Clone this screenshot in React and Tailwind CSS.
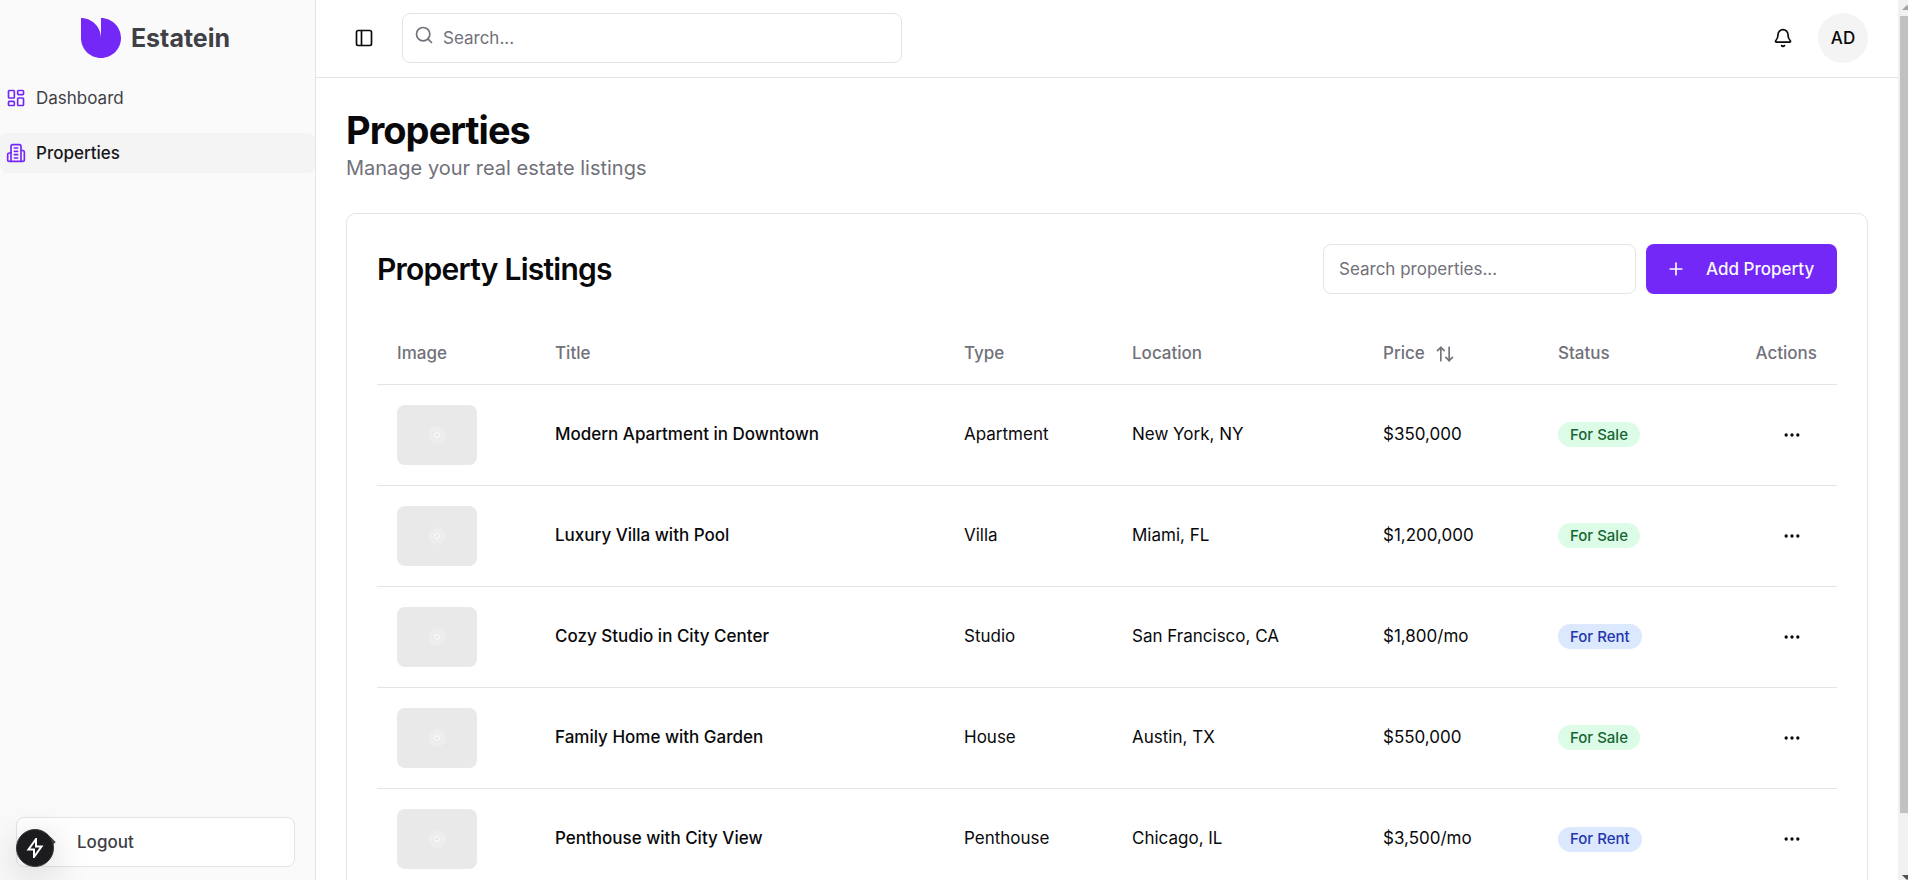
import {
  ArrowUpDown,
  Bell,
  Ellipsis,
  LayoutDashboard,
  LogOut,
  PanelLeft,
  Plus,
  Search,
} from "lucide-react";

const listings = [
  { title: "Modern Apartment in Downtown", type: "Apartment", location: "New York, NY", price: "$350,000", status: "For Sale" },
  { title: "Luxury Villa with Pool", type: "Villa", location: "Miami, FL", price: "$1,200,000", status: "For Sale" },
  { title: "Cozy Studio in City Center", type: "Studio", location: "San Francisco, CA", price: "$1,800/mo", status: "For Rent" },
  { title: "Family Home with Garden", type: "House", location: "Austin, TX", price: "$550,000", status: "For Sale" },
  { title: "Penthouse with City View", type: "Penthouse", location: "Chicago, IL", price: "$3,500/mo", status: "For Rent" },
];

const badgeColors = {
  "For Sale": "bg-[#dcfce7] text-[#166534]",
  "For Rent": "bg-[#dbe8fe] text-[#2536ac]",
};

function Logo() {
  return (
    <svg className="size-10" viewBox="0 0 40 40" fill="#7428f8" aria-hidden="true">
      <path d="M0 0C11 0 20 9 20 20V0C31 0 40 9 40 20S31 40 20 40S0 31 0 20Z" />
    </svg>
  );
}

function BuildingIcon() {
  return (
    <svg
      className="size-5 text-[#7428f8]"
      viewBox="0 0 24 24"
      fill="none"
      stroke="currentColor"
      strokeWidth="2"
      strokeLinecap="round"
      strokeLinejoin="round"
      aria-hidden="true"
    >
      <path d="M6 22V4a2 2 0 0 1 2-2h8a2 2 0 0 1 2 2v18Z" />
      <path d="M6 12H4a2 2 0 0 0-2 2v6a2 2 0 0 0 2 2h2" />
      <path d="M18 9h2a2 2 0 0 1 2 2v9a2 2 0 0 1-2 2h-2" />
      <path d="M10 6h4M10 10h4M10 14h4M10 18h4" />
    </svg>
  );
}

function Thumbnail() {
  return (
    <svg className="block h-[60px] w-20 rounded-lg bg-[#e9e9e9]" viewBox="0 0 80 60" fill="none" aria-hidden="true">
      <path d="M30 20l20 20M50 20L30 40" stroke="#e6e6e6" />
      <circle cx="40" cy="30" r="9" fill="#ededed" />
      <circle cx="40" cy="30" r="6" stroke="#efefef" />
      <circle cx="40" cy="30" r="3" fill="#f6f6f6" />
      <path d="M39 31l2-2" stroke="#cfcfcf" />
    </svg>
  );
}

function Sidebar() {
  return (
    <aside className="flex w-[316px] shrink-0 flex-col border-r border-[#e4e4e7] bg-[#fafafa] text-[#3f3f46]">
      <div className="flex h-[78px] items-center justify-center gap-[10px] pr-1 pb-[2px]">
        <Logo />
        <span className="text-[25px] leading-[35px] font-bold">Estatein</span>
      </div>
      <nav className="flex flex-col gap-[15px]">
        <a href="#dashboard" className="flex h-10 items-center gap-[10px] rounded-lg px-[6px]">
          <LayoutDashboard className="size-5 text-[#7428f8]" />
          Dashboard
        </a>
        <a href="#properties" className="flex h-10 items-center gap-[10px] rounded-lg bg-[#f4f4f5] px-[6px] font-medium text-[#18181b]" aria-current="page">
          <BuildingIcon />
          Properties
        </a>
      </nav>
      <div className="mt-auto py-[13px] pr-5 pl-4">
        <button type="button" className="flex h-[50px] w-full items-center gap-5 rounded-lg border border-[#e4e4e7] bg-white px-5 font-medium">
          <LogOut className="size-5" />
          Logout
        </button>
      </div>
    </aside>
  );
}

function Header() {
  return (
    <header className="flex h-[78px] shrink-0 items-center gap-5 border-b border-[#e4e4e7] px-[30px] pb-px">
      <button type="button" aria-label="Toggle sidebar" className="flex size-[36px] items-center justify-center">
        <PanelLeft className="size-5" />
      </button>
      <label className="relative block w-[500px]">
        <Search className="absolute top-3 left-3 size-5 text-[#71717a]" />
        <input
          type="search"
          aria-label="Search"
          placeholder="Search..."
          className="h-[50px] w-full rounded-lg border border-[#e4e4e7] bg-white pr-4 pl-10 placeholder:text-[#71717a]"
        />
      </label>
      <div className="ml-auto flex items-center gap-[10px]">
        <button type="button" aria-label="Notifications" className="flex size-[50px] items-center justify-center">
          <Bell className="size-5" />
        </button>
        <button type="button" className="size-[50px] rounded-full bg-[#f4f4f5] font-medium">AD</button>
      </div>
    </header>
  );
}

function ListingsTable() {
  return (
    <table className="w-full table-fixed text-left">
      <colgroup>
        <col className="w-[158px]" />
        <col />
        <col className="w-[168px]" />
        <col className="w-[251px]" />
        <col className="w-[175px]" />
        <col className="w-[150px]" />
        <col className="w-[149px]" />
      </colgroup>
      <thead>
        <tr className="h-[60px] border-b border-[#e4e4e7] text-[#71717a] [&>th]:px-5 [&>th]:font-medium">
          <th>Image</th>
          <th>Title</th>
          <th>Type</th>
          <th>Location</th>
          <th aria-sort="none">
            <button type="button" className="flex items-center gap-[10px]">
              Price
              <ArrowUpDown className="size-5" />
            </button>
          </th>
          <th>Status</th>
          <th className="text-right">Actions</th>
        </tr>
      </thead>
      <tbody>
        {listings.map((listing) => (
          <tr key={listing.title} className="h-[101px] border-b border-[#e4e4e7] last:border-b-0 [&>td]:px-5">
            <td><Thumbnail /></td>
            <td className="font-medium">{listing.title}</td>
            <td>{listing.type}</td>
            <td>{listing.location}</td>
            <td>{listing.price}</td>
            <td>
              <span className={`inline-flex h-[25px] items-center rounded-full px-3 align-middle text-[15px] leading-5 font-medium ${badgeColors[listing.status]}`}>
                {listing.status}
              </span>
            </td>
            <td>
              <button type="button" aria-label={`Actions for ${listing.title}`} className="ml-auto flex size-[50px] items-center justify-center">
                <Ellipsis className="size-5" />
              </button>
            </td>
          </tr>
        ))}
      </tbody>
    </table>
  );
}

function Scrollbar() {
  return (
    <div className="flex w-[10px] shrink-0 flex-col overflow-hidden bg-[#f1f1f1] pl-[2px]" aria-hidden="true">
      <svg className="h-4 w-4 shrink-0" viewBox="0 0 16 16" fill="#a3a3a3"><path d="M2 10l5-5 5 5z" /></svg>
      <div className="grow bg-[#c1c1c1]" />
      <div className="h-[51px] shrink-0" />
      <svg className="h-4 w-4 shrink-0" viewBox="0 0 16 16" fill="#505050"><path d="M2 11l5 5 5-5z" /></svg>
    </div>
  );
}

export default function App() {
  return (
    <div className="flex h-screen overflow-hidden bg-white font-['Inter',sans-serif] text-[17px] leading-[25px] text-[#09090b]">
      <Sidebar />
      <div className="flex min-w-0 grow flex-col">
        <Header />
        <main className="flex min-h-0 grow flex-col gap-[30px] overflow-hidden p-[30px] pb-0">
          <div>
            <h1 className="text-[38px] leading-[45px] font-bold tracking-tight">Properties</h1>
            <p className="text-[20px] leading-[30px] text-[#71717a]">Manage your real estate listings</p>
          </div>
          <section className="shrink-0 rounded-[10px] border border-[#e4e4e7] p-[30px]">
            <div className="mb-[30px] flex items-center justify-between">
              <h2 className="text-[30px] leading-[40px] font-semibold tracking-tight">Property Listings</h2>
              <div className="flex gap-[10px]">
                <input
                  type="search"
                  aria-label="Search properties"
                  placeholder="Search properties..."
                  className="h-[50px] w-[313px] rounded-lg border border-[#e4e4e7] bg-white px-[15px] placeholder:text-[#71717a]"
                />
                <button type="button" className="flex h-[50px] min-w-[191px] items-center gap-5 rounded-lg bg-[#7428f8] px-5 font-medium text-[#fafafa]">
                  <Plus className="size-5" />
                  Add Property
                </button>
              </div>
            </div>
            <ListingsTable />
          </section>
        </main>
      </div>
      <Scrollbar />
      <button
        type="button"
        aria-label="Open developer tools"
        className="fixed bottom-[13px] left-4 flex size-[38px] items-center justify-center rounded-full border border-[#3a3a3c] bg-[#1c1c1e] text-white shadow-[0_10px_40px_rgba(0,0,0,0.2)]"
      >
        <svg className="size-5" viewBox="0 0 20 20" fill="none" stroke="currentColor" strokeWidth="2" aria-hidden="true">
          <path d="M11 1L3.500 11.500H9V19L16.500 8.500H11Z" />
        </svg>
      </button>
    </div>
  );
}
